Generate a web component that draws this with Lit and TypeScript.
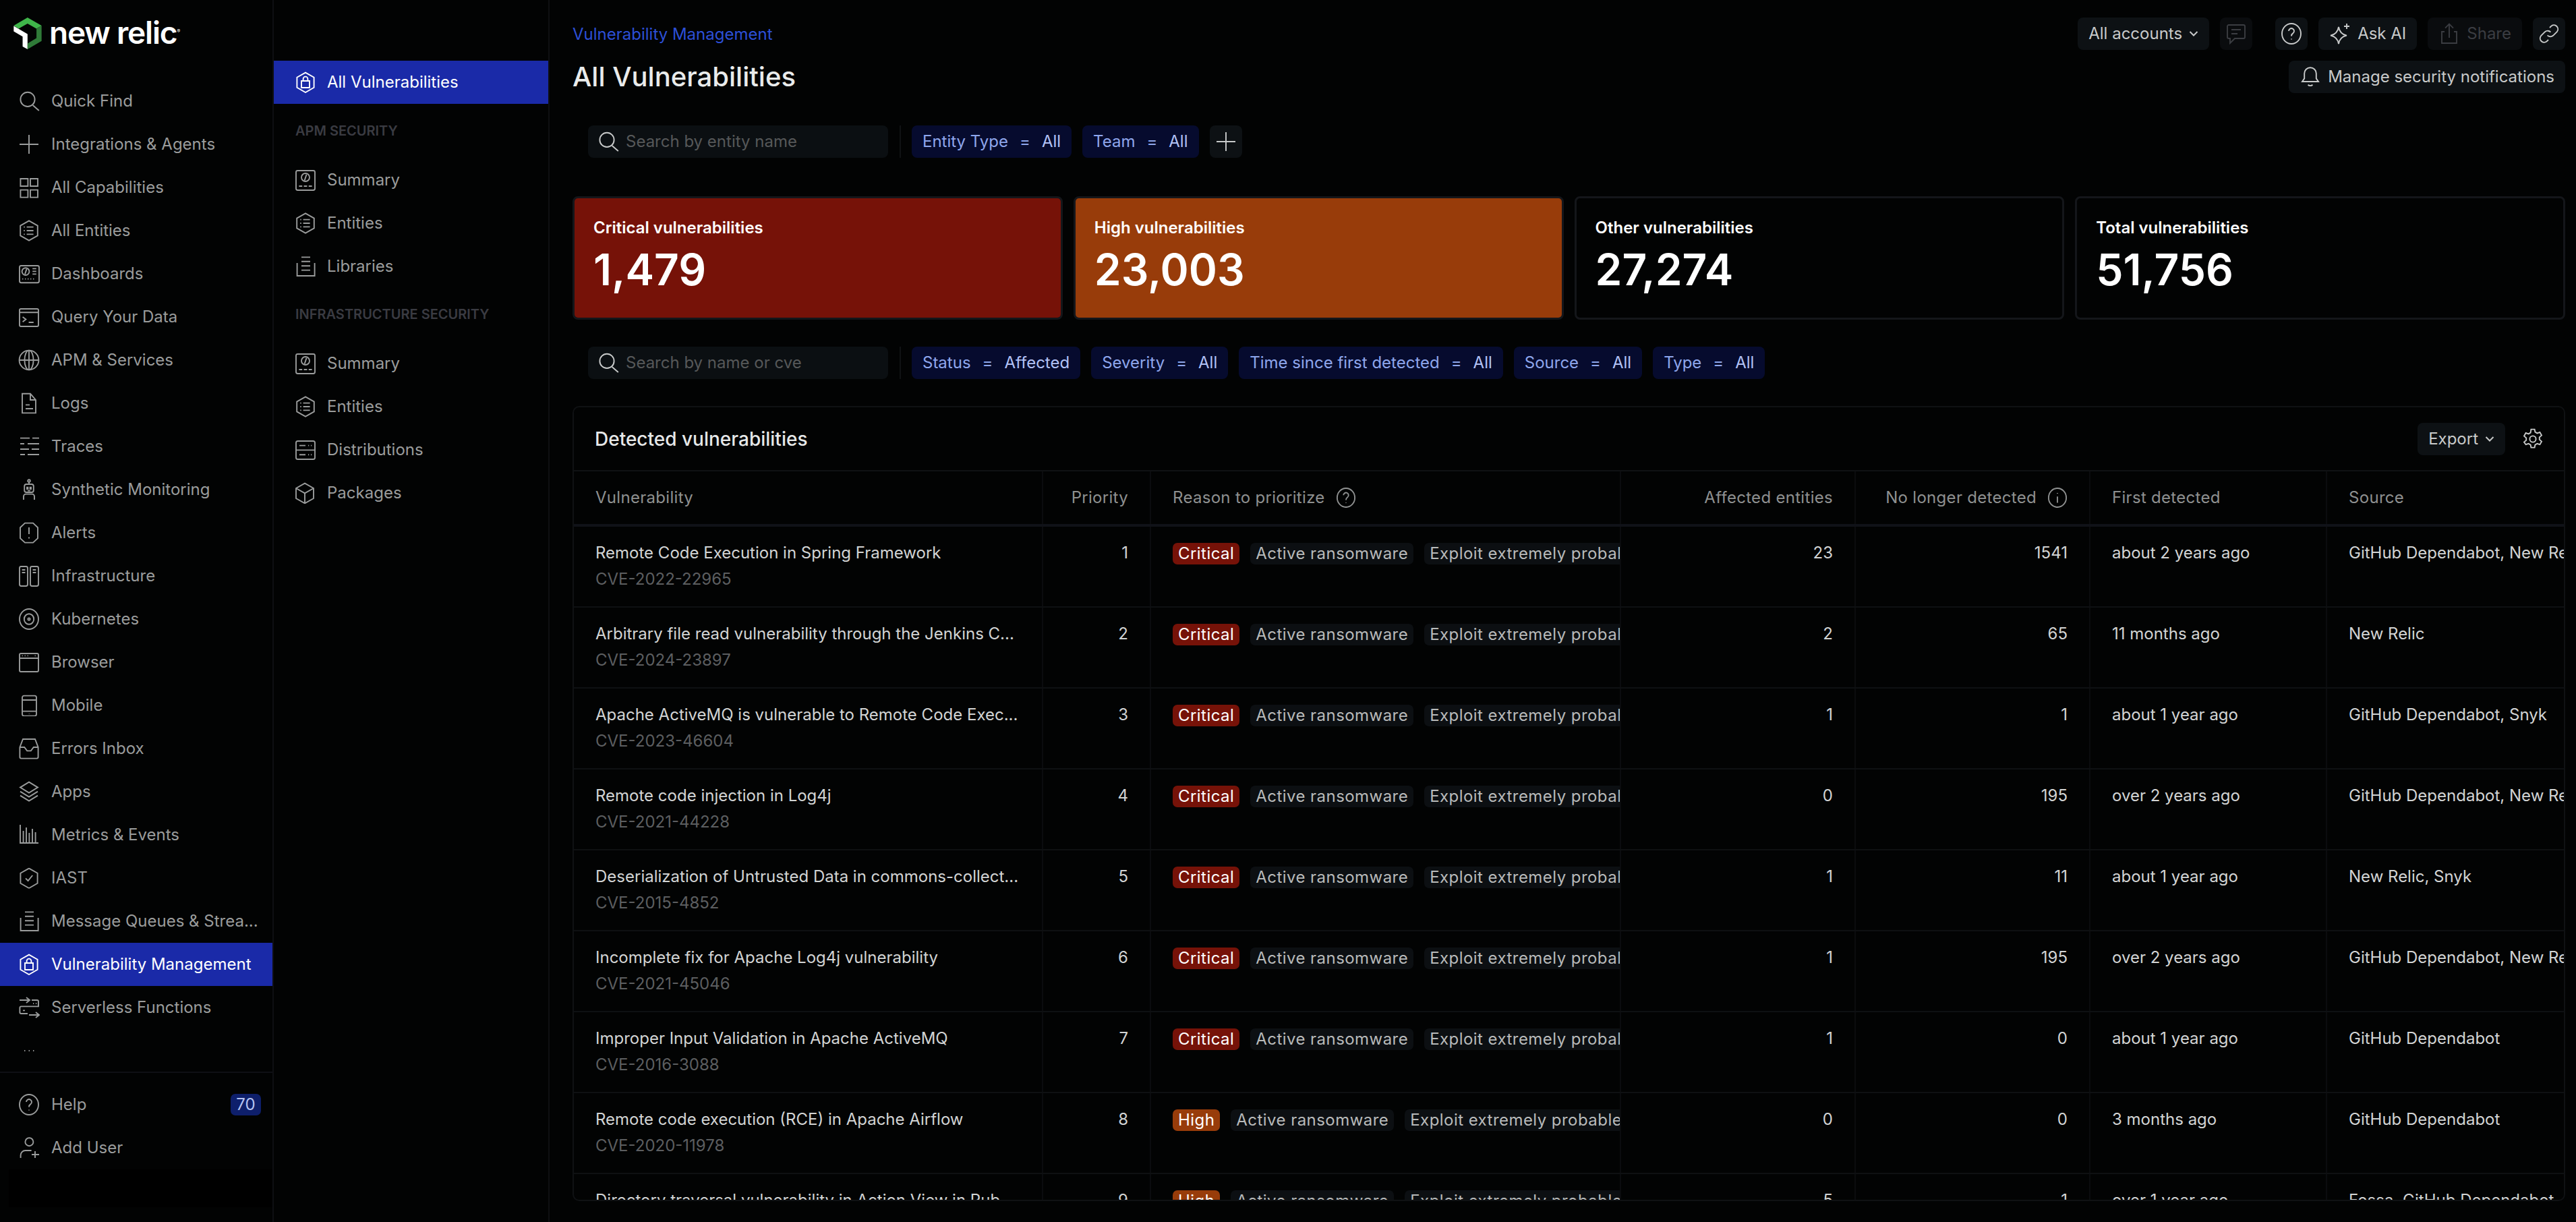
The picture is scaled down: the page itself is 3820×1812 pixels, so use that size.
import { LitElement, html, css, svg, TemplateResult } from "lit";
import { customElement } from "lit/decorators.js";

const hex = svg`<path d="M8 .7l6.4 3.6v7.4L8 15.3l-6.4-3.6V4.3z"/>`;

const icons: Record<string, TemplateResult> = {
  search: svg`<circle cx="7" cy="6.7" r="5.3"/><path d="M10.8 11l4.6 4"/>`,
  plus: svg`<path d="M8 1v14M1 8h14"/>`,
  grid: svg`<path d="M1.7 1.5h5.5V7H1.7zM9 1.5h5.5V7H9zM1.7 9.8h5.5v5.5H1.7zM9 9.8h5.5v5.5H9z"/>`,
  entities: svg`${hex}<path d="M6.3 5.3h5M6.3 8h5M6.3 10.7h5M4.1 5.3h.8M4.1 8h.8M4.1 10.7h.8"/>`,
  dashboard: svg`<rect x="1" y="2" width="14.5" height="12.6" rx="1.2"/><circle cx="5.5" cy="6.3" r="2.7"/><path d="M6.3 4.3L5 8.3M10.6 4.2h2.8M10.6 6.2h2.8M10.6 8.2h2.8M3 11.8h.7M5 11.8h.7M7 11.8h.7M9 11.8h.7M11 11.8h.7"/>`,
  query: svg`<rect x="1" y="2" width="14" height="13" rx="1"/><path d="M1 4.6h14M3.3 8l2.4 1.8-2.4 1.8M7.8 12h3.6"/>`,
  globe: svg`<circle cx="8" cy="8" r="7.2"/><ellipse cx="8" cy="8" rx="3.3" ry="7.2"/><path d="M8 .8v14.4M.8 8h14.4"/>`,
  logs: svg`<path d="M3 .9h6l4 4.6v9.7H3zM9 .9v4.6h4M5.5 9.2h3M5.5 12h5.5"/>`,
  traces: svg`<path d="M1.5 1.8h7M10.5 1.8h5M1.5 6h3M7 6h8.500M1.500 10h6.500M10 10h5.500M1.500 14h3.500M7 14h8.500"/>`,
  robot: svg`<circle cx="8" cy="1.500" r=".9"/><path d="M8 2.400v1.600"/><rect x="4.600" y="4" width="6.800" height="6" rx="1.500"/><path d="M6.500 6.300h.700v1.200h-.700zM8.800 6.300h.700v1.200h-.700zM7 8.800h2M4 15.500v-2.500a1.700 1.700 0 0 1 1.700-1.700h4.600A1.700 1.700 0 0 1 12 13v2.500"/>`,
  alerts: svg`<path d="M5 .8h6l3.500 3.300v8L11 15.300H5L1.500 12.100v-8zM8 4v5M8 11.300v1"/>`,
  infra: svg`<rect x="1" y="1" width="6" height="14.500" rx="1.200"/><rect x="9" y="1" width="6" height="14.500" rx="1.200"/><path d="M2.800 3.500h2.400M2.800 5.500h2.400M10.800 3.500h2.400M10.800 5.500h2.400"/>`,
  kube: svg`<ellipse cx="8" cy="8" rx="7" ry="7.500"/><ellipse cx="8" cy="8" rx="3.600" ry="3.900"/><circle cx="8" cy="8" r=".8"/>`,
  browser: svg`<rect x="1" y="1.500" width="14" height="13.500" rx="1"/><path d="M1 5h14M2.800 3.200h.6M4.800 3.200h.6M6.800 3.200h.6M12.300 3.200h.6"/>`,
  mobile: svg`<rect x="3" y=".8" width="10.500" height="15" rx="1.300"/><path d="M3 4h10.500M3 12.300h10.500M8.200 14v.3"/>`,
  inbox: svg`<path d="M1.200 7l2.300-6h9l2.300 6v7.300a1 1 0 0 1-1 1H2.200a1 1 0 0 1-1-1zM1.200 7h3.400l2 2.700h2.800l2-2.700h3.400"/>`,
  apps: svg`<path d="M8 .8l6.500 4L8 8.800l-6.500-4zM1.500 7.800L8 11.800l6.500-4M1.500 10.800L8 14.800l6.500-4"/>`,
  metrics: svg`<path d="M1.500 .5v13.500h13.500M3.800 5v9M6 2.500v11.500M8.200 6.500v7.500M10.500 3.500v10.500M12.800 6v8"/>`,
  shield: svg`<path d="M8 .8l6.300 3.600v7.500L8 15.500M8 .8L1.700 4.400v7.500L8 15.500M5.500 8.200L7.300 10l3.300-4"/>`,
  stack: svg`<path d="M5 1.200h6.500M5 4.400h6.500M5 7.600h6.500M5 10.800h6.500M1.800 5.500v9.500h13V5.500"/>`,
  lock: svg`<path d="M8 .8l6.300 3.600v7.500L8 15.500 1.700 11.900V4.400zM5 7h6v5H5zM6.300 7V5.500a1.700 1.700 0 0 1 3.400 0V7"/>`,
  serverless: svg`<path d="M1 2.500h7M6 .5l2.500 2-2.500 2M10 2.500h4a1 1 0 0 1 1 1v3.700H2.200a1 1 0 0 0-1 1v3.300a1 1 0 0 0 1 1H7M8 13.500h7.500M13 11.500l2.500 2-2.500 2M11 5h.6M13 5h.6M3.500 10.200h1.500"/>`,
  dots: svg`<path d="M4.500 8h.7M7.800 8h.7M11 8h.7"/>`,
  help: svg`<ellipse cx="8" cy="8" rx="7" ry="7.500"/><path d="M6 6a2 2 0 1 1 3.100 1.700C8.300 8.200 8 8.700 8 9.800M8 11.800v.4"/>`,
  addUser: svg`<circle cx="8.200" cy="3.600" r="3"/><path d="M1.800 15.500v-2a3.500 3.500 0 0 1 3.500-3.500h4.500M12.500 10.500v5M10 13h5.500"/>`,
  summary: svg`<rect x="1" y="1" width="14" height="14.500" rx="1.200"/><circle cx="8" cy="6" r="3"/><path d="M8.800 3.800L7.300 8.300M3.200 12.500h2.400M6.800 12.500h2.400M10.400 12.500h2.400"/>`,
  dist: svg`<rect x="1" y="1.500" width="14" height="13.500" rx="1.300"/><path d="M1 8.200h14M3.500 4.800h4.500M10 4.800h.6M12 4.800h.6M3.500 11.600h4.500M10 11.600h.6M12 11.600h.6"/>`,
  box: svg`<path d="M7.500 .8l6.500 3.700v7.500l-6.500 3.700L1 12V4.500zM1 4.500l6.500 3.700L14 4.500M7.500 8.200v7.500"/>`,
  chat: svg`<path d="M2.500 1.500h11a1 1 0 0 1 1 1v8a1 1 0 0 1-1 1H7L3.500 15v-3.500h-1a1 1 0 0 1-1-1v-8a1 1 0 0 1 1-1zM4.500 5h7M4.500 8h4.500"/>`,
  spark: svg`<path d="M7 3c.6 3.700 2.300 5.600 6 6.300-3.700.7-5.400 2.600-6 6.200-.6-3.600-2.300-5.500-6-6.200 3.700-.7 5.400-2.600 6-6.300zM13 .5v4M11 2.500h4"/>`,
  share: svg`<path d="M4.500 6.500H2.500v8.500h11V6.500h-2M8 11V.8M5 3.800L8 .8l3 3"/>`,
  link: svg`<path d="M6.800 9.200a3 3 0 0 0 4.200.2l3-3a3 3 0 0 0-4.200-4.200L8.500 3.500M9.200 6.800a3 3 0 0 0-4.200-.2l-3 3a3 3 0 0 0 4.200 4.200l1.300-1.300"/>`,
  bell: svg`<path d="M2 11.500l1.600-2.300V5.500a4.400 4.400 0 0 1 8.800 0v3.700l1.600 2.300zM6.300 13.800c.8 1 2.600 1 3.400 0"/>`,
  gear: svg`<path d="M6.700 .8h2.600l.4 2 1.500.9 2-.7 1.300 2.300-1.600 1.400v1.700l1.600 1.400-1.300 2.300-2-.7-1.500.9-.4 2H6.700l-.4-2-1.500-.9-2 .7L1.500 10.300l1.600-1.400V7.200L1.500 5.800 2.800 3.500l2 .7 1.500-.9z"/><circle cx="8" cy="8" r="2.300"/>`,
  info: svg`<ellipse cx="8" cy="8" rx="7" ry="7.500"/><path d="M8 7v5M8 4.300v.5"/>`,
};

const icon = (name: string, size = 32) => html`<svg
  class="ico"
  width=${size}
  height=${size}
  viewBox="0 0 16 16"
  fill="none"
  stroke="currentColor"
  stroke-width=${16 / size * 1.9}
>${icons[name]}</svg>`;

const chevron = html`<svg class="chev" width="14" height="14" viewBox="0 0 14 14" fill="none" stroke="currentColor" stroke-width="2"><path d="M1.500 4l5.500 5.500L12.500 4"/></svg>`;

const NAV = [
  ["search", "Quick Find"],
  ["plus", "Integrations & Agents"],
  ["grid", "All Capabilities"],
  ["entities", "All Entities"],
  ["dashboard", "Dashboards"],
  ["query", "Query Your Data"],
  ["globe", "APM & Services"],
  ["logs", "Logs"],
  ["traces", "Traces"],
  ["robot", "Synthetic Monitoring"],
  ["alerts", "Alerts"],
  ["infra", "Infrastructure"],
  ["kube", "Kubernetes"],
  ["browser", "Browser"],
  ["mobile", "Mobile"],
  ["inbox", "Errors Inbox"],
  ["apps", "Apps"],
  ["metrics", "Metrics & Events"],
  ["shield", "IAST"],
  ["stack", "Message Queues & Strea..."],
  ["lock", "Vulnerability Management"],
  ["serverless", "Serverless Functions"],
  ["dots", ""],
];

const ROWS = [
  ["Remote Code Execution in Spring Framework", "CVE-2022-22965", "1", "Critical", "23", "1541", "about 2 years ago", "GitHub Dependabot, New Relic"],
  ["Arbitrary file read vulnerability through the Jenkins C...", "CVE-2024-23897", "2", "Critical", "2", "65", "11 months ago", "New Relic"],
  ["Apache ActiveMQ is vulnerable to Remote Code Exec...", "CVE-2023-46604", "3", "Critical", "1", "1", "about 1 year ago", "GitHub Dependabot, Snyk"],
  ["Remote code injection in Log4j", "CVE-2021-44228", "4", "Critical", "0", "195", "over 2 years ago", "GitHub Dependabot, New Relic"],
  ["Deserialization of Untrusted Data in commons-collect...", "CVE-2015-4852", "5", "Critical", "1", "11", "about 1 year ago", "New Relic, Snyk"],
  ["Incomplete fix for Apache Log4j vulnerability", "CVE-2021-45046", "6", "Critical", "1", "195", "over 2 years ago", "GitHub Dependabot, New Relic"],
  ["Improper Input Validation in Apache ActiveMQ", "CVE-2016-3088", "7", "Critical", "1", "0", "about 1 year ago", "GitHub Dependabot"],
  ["Remote code execution (RCE) in Apache Airflow", "CVE-2020-11978", "8", "High", "0", "0", "3 months ago", "GitHub Dependabot"],
  ["Directory traversal vulnerability in Action View in Rub...", "CVE-2018-3760", "9", "High", "5", "1", "over 1 year ago", "Fossa, GitHub Dependabot"],
];

@customElement("app-root")
class AppRoot extends LitElement {
  static styles = css`
    :host {
      display: flex;
      height: 1812px;
      overflow: hidden;
      background: #020303;
      color: #c8caca;
      font-family: Inter, "Liberation Sans", sans-serif;
      font-size: 24px;
      line-height: 30px;
    }
    * {
      box-sizing: border-box;
    }
    .ico,
    .chev {
      flex: none;
    }

    /* left nav */
    .nav {
      width: 406px;
      flex: none;
      border-right: 2px solid #0e0f12;
      color: #9a9c9c;
      display: flex;
      flex-direction: column;
    }
    .logo {
      height: 118px;
      padding: 26px 0 0 20px;
      display: flex;
      align-items: flex-start;
      gap: 11px;
    }
    .logo-text {
      color: #fff;
      font-size: 46px;
      font-weight: 600;
      line-height: 44px;
      letter-spacing: -1.200px;
    }
    .logo-text sup {
      font-size: 7px;
      font-weight: 400;
      line-height: 0;
      letter-spacing: 0;
    }
    .row {
      height: 64px;
      flex: none;
      display: flex;
      align-items: center;
      gap: 17px;
      padding-left: 27px;
      white-space: nowrap;
    }
    .row.active {
      background: #1a2aa8;
      color: #fff;
    }
    .nav-bottom {
      margin-top: -1px;
      border-top: 2px solid #0e0f14;
      padding-top: 15px;
    }
    .badge {
      margin: 0 17px 0 auto;
      width: 45px;
      height: 32px;
      border-radius: 7px;
      background: #0e1f6b;
      color: #b4c2f2;
      text-align: center;
      line-height: 32px;
    }
    .nav-foot {
      height: 56px;
      margin-left: 13px;
      background: #000;
    }

    /* second nav */
    .subnav {
      width: 409px;
      flex: none;
      padding-top: 90px;
      border-right: 2px solid #0e0f12;
      color: #9a9c9c;
    }
    .subnav .row {
      padding-left: 31px;
      gap: 16px;
    }
    .label {
      height: 81px;
      padding: 25px 0 0 32px;
      color: #3a3b42;
      font-size: 20px;
      font-weight: 600;
      white-space: nowrap;
    }
    .label.tight {
      height: 80px;
      padding-top: 24px;
    }

    /* main */
    .main {
      flex: 1;
      min-width: 0;
      padding: 26px 16px 0 34px;
      display: flex;
      flex-direction: column;
    }
    .head {
      display: flex;
      justify-content: space-between;
      height: 160px;
    }
    .crumb {
      margin-top: 10px;
      color: #2c4fd6;
    }
    .title {
      margin-top: 23px;
      color: #e9ebeb;
      font-size: 40px;
      font-weight: 500;
      line-height: 50px;
    }
    .actions {
      display: flex;
      flex-direction: column;
      align-items: flex-end;
      gap: 16px;
    }
    .btns {
      display: flex;
      gap: 16px;
    }
    .btn {
      height: 48px;
      display: flex;
      align-items: center;
      gap: 10px;
      padding: 0 16px;
      background: #0d1114;
      border-radius: 8px;
      white-space: nowrap;
      color: #c8caca;
    }
    .btn.square {
      width: 48px;
      padding: 0;
      justify-content: center;
    }
    .btn.off {
      background: #0a0c0e;
      color: #3b3d42;
    }
    .help-btn {
      margin-left: 18px;
    }

    .filters {
      display: flex;
      gap: 16px;
      height: 48px;
      padding-left: 23px;
      flex: none;
    }
    .search {
      width: 445px;
      margin-right: 1px;
      background: #0b0f12;
      border-radius: 8px;
      display: flex;
      align-items: center;
      gap: 10px;
      padding-left: 14px;
      color: #565859;
    }
    .search .ico {
      color: #c8caca;
    }
    .sep {
      width: 2px;
      background: #101214;
    }
    .chip {
      display: flex;
      align-items: center;
      gap: 17px;
      padding: 0 16px;
      border-radius: 8px;
      background: #060b2e;
      color: #8ea6ec;
      white-space: nowrap;
    }
    .chip b {
      font-weight: 400;
      color: #b2c2f6;
    }
    .chip i {
      font-style: normal;
    }
    .add {
      width: 48px;
      padding: 0;
      justify-content: center;
      background: #0d1114;
      color: #c8caca;
    }

    .cards {
      margin-top: 57px;
      height: 183px;
      flex: none;
      display: grid;
      grid-template-columns: repeat(4, 1fr);
      gap: 16px;
    }
    .card {
      border: 3px solid #14161a;
      border-radius: 8px;
      padding: 29px 28px;
      color: #fff;
    }
    .card.crit {
      background: #761208;
    }
    .card.high {
      background: #983c0a;
    }
    .card .l {
      font-weight: 600;
    }
    .card .n {
      margin-top: 11px;
      font-size: 64px;
      line-height: 72px;
      font-weight: 600;
    }
    .second {
      margin-top: 40px;
    }

    .table {
      margin-top: 40px;
      height: 1179px;
      flex: none;
      border: 2px solid #0f1113;
      border-radius: 10px;
      overflow: hidden;
    }
    .t-head {
      height: 95px;
      display: flex;
      align-items: center;
      justify-content: space-between;
      padding: 0 30px 0 31px;
      border-bottom: 2px solid #0f1113;
    }
    .t-head h2 {
      margin: 0;
      color: #e6e8e8;
      font-size: 28px;
      font-weight: 500;
    }
    .tools {
      display: flex;
      align-items: center;
      gap: 25px;
    }
    .tr {
      display: grid;
      grid-template-columns: 695.500px 160.500px 697px 348px 348px 351px 1fr;
      height: 120px;
      border-bottom: 2px solid #0e1012;
    }
    .tr.hd {
      height: 82px;
      border-bottom: 4px solid #101218;
      color: #8e9090;
      letter-spacing: 0.300px;
    }
    .tc {
      border-right: 2px solid #0b0c0e;
      padding: 24px 32px 0;
      white-space: nowrap;
      overflow: hidden;
      min-width: 0;
    }
    .tc:last-child {
      border-right: 0;
    }
    .hd .tc {
      padding-top: 0;
      display: flex;
      align-items: center;
      gap: 16px;
    }
    .r {
      text-align: right;
      justify-content: flex-end;
    }
    .name {
      color: #d2d4d4;
    }
    .cve {
      margin-top: 9px;
      color: #5c5e60;
    }
    .reasons {
      display: flex;
      gap: 16px;
      padding-right: 0;
    }
    .tag {
      height: 32px;
      line-height: 32px;
      padding: 0 8px;
      flex: none;
      border-radius: 7px;
      background: #0c0f12;
      color: #b8baba;
      letter-spacing: 0.450px;
    }
    .tag.crit {
      background: #761208;
      color: #fff;
    }
    .tag.high {
      background: #983c0a;
      color: #fff;
    }
  `;

  private renderNavRow(name: string, label: string, active = false) {
    return html`<div class="row ${active ? "active" : ""}">
      ${icon(name)}<span>${label}</span>
    </div>`;
  }

  private renderChip(label: string, value: string) {
    return html`<div class="chip">
      <span>${label}</span><i>=</i><b>${value}</b>
    </div>`;
  }

  private renderCard(label: string, value: string, kind = "") {
    return html`<div class="card ${kind}">
      <div class="l">${label}</div>
      <div class="n">${value}</div>
    </div>`;
  }

  render() {
    return html`
      <nav class="nav">
        <div class="logo">
          <svg width="42" height="47" viewBox="0 0 125 142">
            <path fill="#3fb54a" d="M62 0l63 36-23 14-40-23-40 23L0 36z" />
            <path fill="#fff" d="M0 38l62 36v68l-22-12V85L0 62z" />
            <path fill="#2f7a38" d="M125 36v69l-63 37v-26l40-24V50z" />
          </svg>
          <div class="logo-text">new relic<sup>®</sup></div>
        </div>
        ${NAV.map(([i, l]) => this.renderNavRow(i, l, l === "Vulnerability Management"))}
        <div class="nav-bottom">
          <div class="row">${icon("help")}<span>Help</span><span class="badge">70</span></div>
          ${this.renderNavRow("addUser", "Add User")}
        </div>
        <div class="nav-foot"></div>
      </nav>

      <aside class="subnav">
        ${this.renderNavRow("lock", "All Vulnerabilities", true)}
        <div class="label">APM SECURITY</div>
        ${this.renderNavRow("summary", "Summary")}
        ${this.renderNavRow("entities", "Entities")}
        ${this.renderNavRow("stack", "Libraries")}
        <div class="label tight">INFRASTRUCTURE SECURITY</div>
        ${this.renderNavRow("summary", "Summary")}
        ${this.renderNavRow("entities", "Entities")}
        ${this.renderNavRow("dist", "Distributions")}
        ${this.renderNavRow("box", "Packages")}
      </aside>

      <main class="main">
        <header class="head">
          <div>
            <div class="crumb">Vulnerability Management</div>
            <div class="title">All Vulnerabilities</div>
          </div>
          <div class="actions">
            <div class="btns">
              <div class="btn">All accounts ${chevron}</div>
              <div class="btn square off">${icon("chat")}</div>
              <div class="btn square help-btn">${icon("help")}</div>
              <div class="btn">${icon("spark")}Ask AI</div>
              <div class="btn off">${icon("share")}Share</div>
              <div class="btn square">${icon("link")}</div>
            </div>
            <div class="btn">${icon("bell")}Manage security notifications</div>
          </div>
        </header>

        <div class="filters">
          <div class="search">${icon("search")}Search by entity name</div>
          <div class="sep"></div>
          ${this.renderChip("Entity Type", "All")}
          ${this.renderChip("Team", "All")}
          <div class="chip add">${icon("plus")}</div>
        </div>

        <section class="cards">
          ${this.renderCard("Critical vulnerabilities", "1,479", "crit")}
          ${this.renderCard("High vulnerabilities", "23,003", "high")}
          ${this.renderCard("Other vulnerabilities", "27,274")}
          ${this.renderCard("Total vulnerabilities", "51,756")}
        </section>

        <div class="filters second">
          <div class="search">${icon("search")}Search by name or cve</div>
          <div class="sep"></div>
          ${this.renderChip("Status", "Affected")}
          ${this.renderChip("Severity", "All")}
          ${this.renderChip("Time since first detected", "All")}
          ${this.renderChip("Source", "All")}
          ${this.renderChip("Type", "All")}
        </div>

        <section class="table">
          <div class="t-head">
            <h2>Detected vulnerabilities</h2>
            <div class="tools">
              <div class="btn">Export ${chevron}</div>
              ${icon("gear")}
            </div>
          </div>
          <div class="tr hd">
            <div class="tc">Vulnerability</div>
            <div class="tc r">Priority</div>
            <div class="tc">Reason to prioritize ${icon("help", 30)}</div>
            <div class="tc r">Affected entities</div>
            <div class="tc r">No longer detected ${icon("info", 30)}</div>
            <div class="tc">First detected</div>
            <div class="tc">Source</div>
          </div>
          ${ROWS.map(
            (r) => html`<div class="tr">
              <div class="tc">
                <div class="name">${r[0]}</div>
                <div class="cve">${r[1]}</div>
              </div>
              <div class="tc r name">${r[2]}</div>
              <div class="tc reasons">
                <span class="tag ${r[3] === "High" ? "high" : "crit"}">${r[3]}</span>
                <span class="tag">Active ransomware</span>
                <span class="tag">Exploit extremely probable</span>
              </div>
              <div class="tc r name">${r[4]}</div>
              <div class="tc r name">${r[5]}</div>
              <div class="tc name">${r[6]}</div>
              <div class="tc name">${r[7]}</div>
            </div>`
          )}
        </section>
      </main>
    `;
  }
}

export { AppRoot };
